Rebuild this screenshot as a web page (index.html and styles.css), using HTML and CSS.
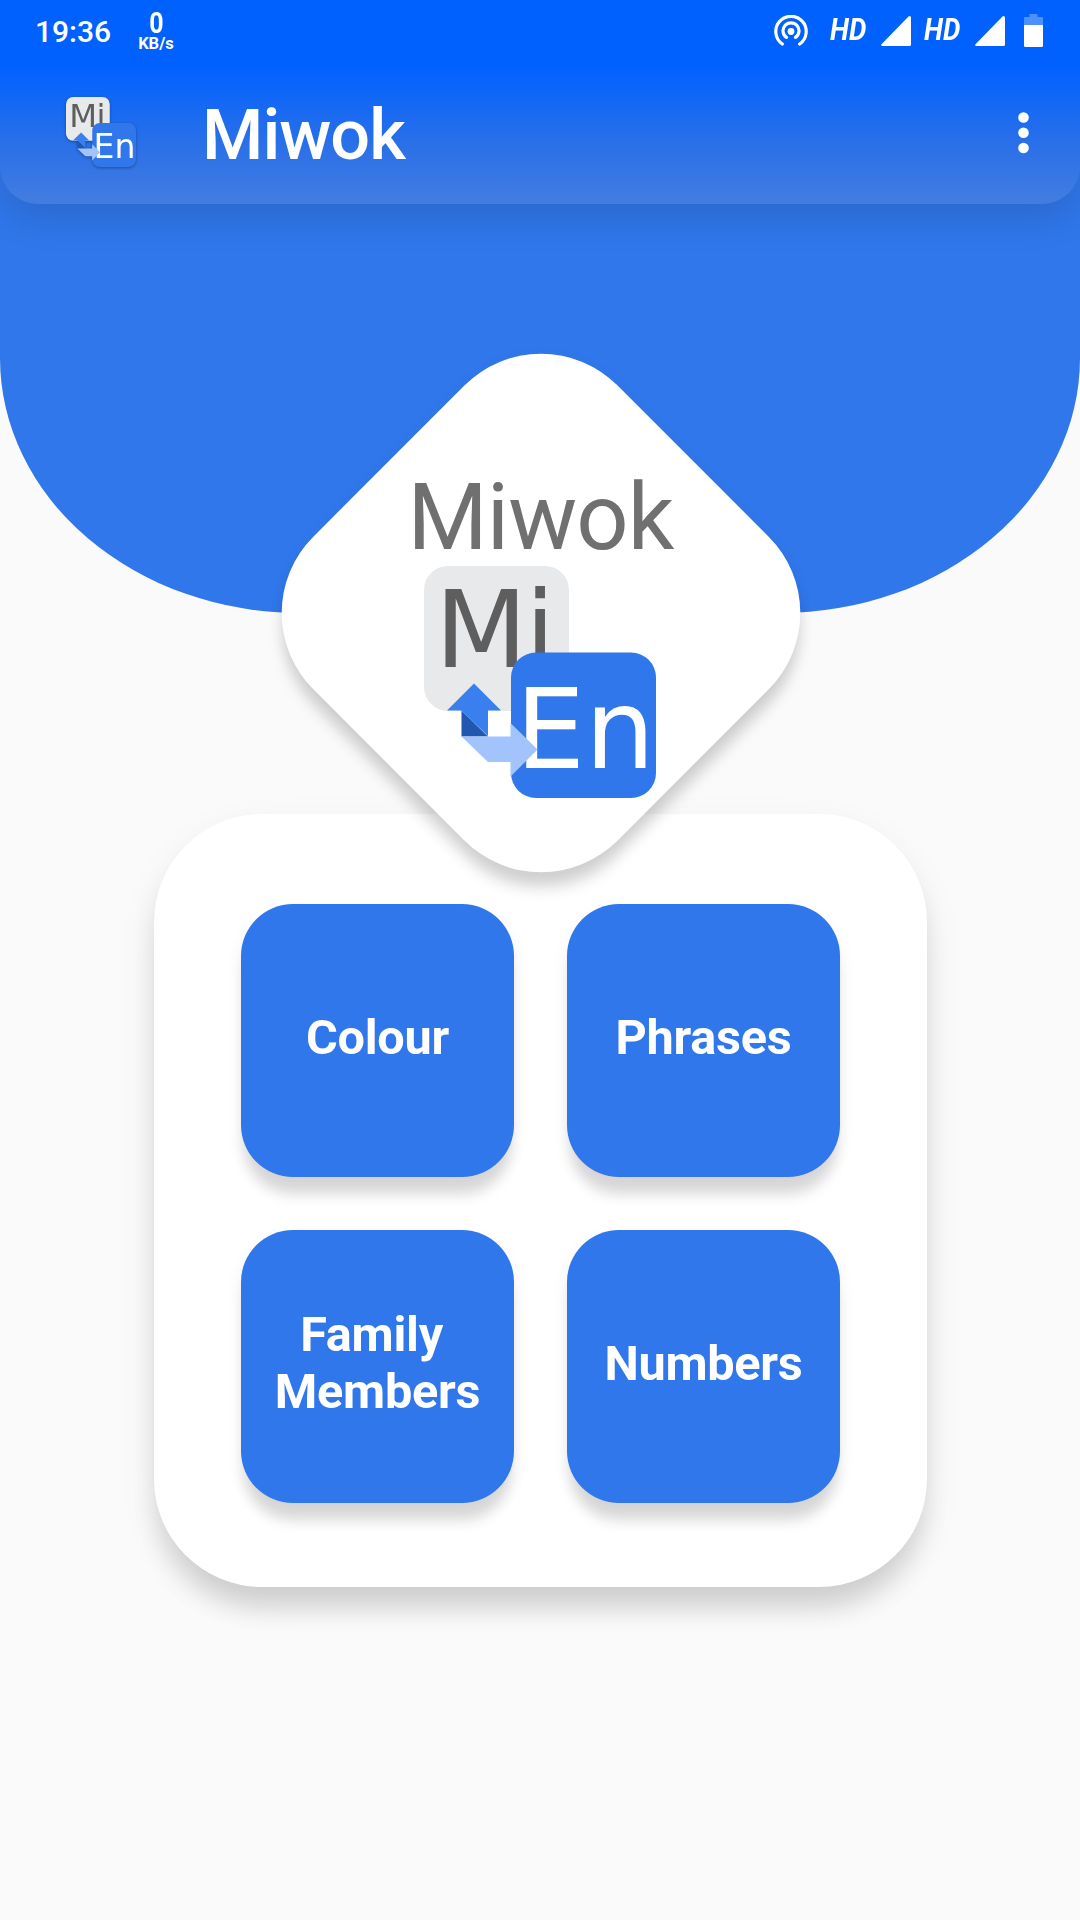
FILE: index.html
```
<!DOCTYPE html>
<html lang="en">
<head>
<meta charset="utf-8">
<title>Miwok</title>
<link rel="stylesheet" href="styles.css">
</head>
<body>
<svg class="defs" width="0" height="0" aria-hidden="true">
  <defs>
    <symbol id="logo" viewBox="0 0 232 232">
      <path fill="#e8e9eb" d="M24 0h97a24 24 0 0 1 24 24v97a24 24 0 0 1-24 24H24a24 24 0 0 1-24-24V24A24 24 0 0 1 24 0z"/>
      <text class="logo-mi" x="11" y="100.600" textLength="120" lengthAdjust="spacing">Mi</text>
      <rect x="87" y="86.500" width="145" height="145.500" rx="25" fill="#3077eb"/>
      <text class="logo-en" x="91.500" y="202.300">En</text>
      <path fill="#397fee" d="M50 117.500 77 144.500H64V170L37.500 144.500H23z"/>
      <path fill="#2157b1" d="M37.500 144.500V170.500H64z"/>
      <path fill="#a2c3fc" d="M37.500 170.500H86.500V157L113.500 183.500 86.500 210.500V196H64z"/>
    </symbol>
    <symbol id="signal" viewBox="0 0 30 30"><path fill="#fff" d="M28.500 0Q30 0 30 1.500V28.500Q30 30 28.500 30H1Q-.5 29.500 .5 28.200L27.500 .5Q28 0 28.500 0z"/></symbol>
  </defs>
</svg>
<div class="screen">
  <header class="topbar">
    <div class="status">
      <span class="clock">19:36</span>
      <span class="speed"><b>0</b><small>KB/s</small></span>
      <span class="status-icons">
        <svg class="hotspot" viewBox="0 0 34 32" fill="none" stroke="#fff" stroke-width="3.200" stroke-linecap="round">
          <circle cx="17" cy="16.500" r="3.400" fill="#fff" stroke="none"/>
          <path d="M12.500 22.400A8 8 0 1 1 21.500 22.400M8.300 29A15.200 15.200 0 1 1 25.700 29"/>
        </svg>
        <i class="hd">HD</i><svg class="signal"><use href="#signal"/></svg>
        <i class="hd">HD</i><svg class="signal"><use href="#signal"/></svg>
        <svg class="battery" viewBox="0 0 19 33"><path fill="#4d91ff" d="M5.500 0h8v3H18q1 0 1 1v8H0V4q0-1 1-1h4.500z"/><path fill="#fff" d="M0 11h19v20.500q0 1.500-1.500 1.500h-16Q0 33 0 31.500z"/></svg>
      </span>
    </div>
    <div class="toolbar">
      <svg class="app-icon"><use href="#logo"/></svg>
      <h1>Miwok</h1>
      <svg class="more" viewBox="0 0 11 42" fill="#fff"><circle cx="5.500" cy="5.500" r="5.300"/><circle cx="5.500" cy="20.700" r="5.300"/><circle cx="5.500" cy="36" r="5.300"/></svg>
    </div>
  </header>
  <div class="hero"></div>
  <div class="badge">
    <div class="diamond"></div>
    <div class="badge-content">
      <p>Miwok</p>
      <svg class="logo"><use href="#logo"/></svg>
    </div>
  </div>
  <main class="card">
    <a class="tile">Colour</a>
    <a class="tile">Phrases</a>
    <a class="tile">Family <br>Members</a>
    <a class="tile">Numbers</a>
  </main>
</div>
</body>
</html>
```
FILE: styles.css
```
* { box-sizing: border-box; }
body {
  margin: 0;
  background: #fafafa;
  font-family: Roboto, sans-serif;
  color: #fff;
}
.defs { position: absolute; }
.screen {
  height: 1920px;
  display: flex;
  flex-direction: column;
  align-items: center;
  overflow: hidden;
}
.topbar {
  position: relative;
  z-index: 1;
  flex: none;
  width: 1080px;
  height: 204px;
  border-radius: 0 0 38px 38px;
  background: linear-gradient(#0061ff 65px, #2b70e8 146px, #437de0 204px);
  box-shadow: 0 12px 38px rgba(0, 0, 0, .14);
}
.status {
  height: 65px;
  padding: 0 37px 0 35px;
  display: flex;
  align-items: flex-start;
}
.clock {
  margin-top: 14px;
  font-size: 30px;
  line-height: 36px;
  font-weight: 500;
}
.speed {
  display: flex;
  flex-direction: column;
  align-items: center;
  margin: 11px 0 0 27px;
}
.speed b { font-size: 29px; line-height: 25px; font-weight: 700; transform: scaleX(.86); }
.speed small { font-size: 16.500px; line-height: 16px; font-weight: 700; }
.status-icons {
  margin-left: auto;
  display: flex;
  align-items: flex-start;
}
.hotspot { width: 34px; height: 32px; margin: 15px 22px 0 0; }
.hd {
  width: 42px;
  margin: 14px 9px 0 0;
  font-size: 31px;
  line-height: 32px;
  font-weight: 700;
  transform: scaleX(.89);
  transform-origin: left;
}
.signal { width: 30px; height: 30px; margin: 16px 13px 0 0; }
.battery { width: 19px; height: 33px; margin: 14px 0 0 6px; }
.toolbar {
  height: 139px;
  padding: 0 51px 0 66px;
  display: flex;
  align-items: flex-start;
}
.app-icon {
  width: 70px;
  height: 70px;
  margin-top: 32px;
  filter: drop-shadow(0 1.500px 1.500px rgba(0, 0, 0, .35));
}
.toolbar h1 {
  margin: 29px auto 0 66px;
  font-size: 70.200px;
  line-height: 82px;
  font-weight: 500;
  letter-spacing: -1px;
}
.more { width: 11px; height: 42px; margin-top: 47px; }
.hero {
  flex: none;
  width: 1080px;
  height: 613px;
  margin-top: -204px;
  border-radius: 0 0 300px 300px / 0 0 255px 255px;
  background: #3077eb;
}
.badge {
  position: relative;
  z-index: 1;
  flex: none;
  width: 430px;
  height: 430px;
  margin: -215px 0 0 1px;
  display: grid;
  place-items: center;
}
.badge > * { grid-area: 1 / 1; }
.diamond {
  width: 430px;
  height: 430px;
  border-radius: 108px;
  background: #fff;
  transform: rotate(45deg);
  box-shadow: 12px 12px 15px -2px rgba(0, 0, 0, .17), 3px 3px 18px rgba(0, 0, 0, .04);
}
.badge-content {
  position: relative;
  padding-top: 42px;
  display: flex;
  flex-direction: column;
  align-items: center;
}
.badge-content p {
  margin: 0;
  font-size: 91.800px;
  line-height: 96px;
  letter-spacing: -.9px;
  color: #707070;
}
.logo { width: 232px; height: 232px; }
.logo-mi, .logo-en { font-family: "DejaVu Sans", sans-serif; }
.logo-mi { font-size: 107px; fill: #5e5e5e; }
.logo-en { font-size: 110px; fill: #fff; }
.card {
  flex: none;
  width: 773px;
  height: 773px;
  margin-top: -14px;
  padding: 89.500px 85.500px 0 87.500px;
  display: grid;
  grid-template-columns: 273px 273px;
  grid-auto-rows: 273px;
  gap: 53px;
  border-radius: 108px;
  background: #fff;
  box-shadow: 0 24px 26px -4px rgba(0, 0, 0, .14), 0 14px 40px rgba(0, 0, 0, .06);
}
.tile {
  display: flex;
  align-items: center;
  justify-content: center;
  padding-bottom: 6px;
  border-radius: 52px;
  background: #3077eb;
  box-shadow: 0 22px 14px -4px rgba(0, 0, 0, .13), 0 8px 18px rgba(0, 0, 0, .06);
  font-size: 48.600px;
  line-height: 57px;
  font-weight: 700;
  letter-spacing: -.25px;
  text-align: center;
  white-space: pre;
}
```
